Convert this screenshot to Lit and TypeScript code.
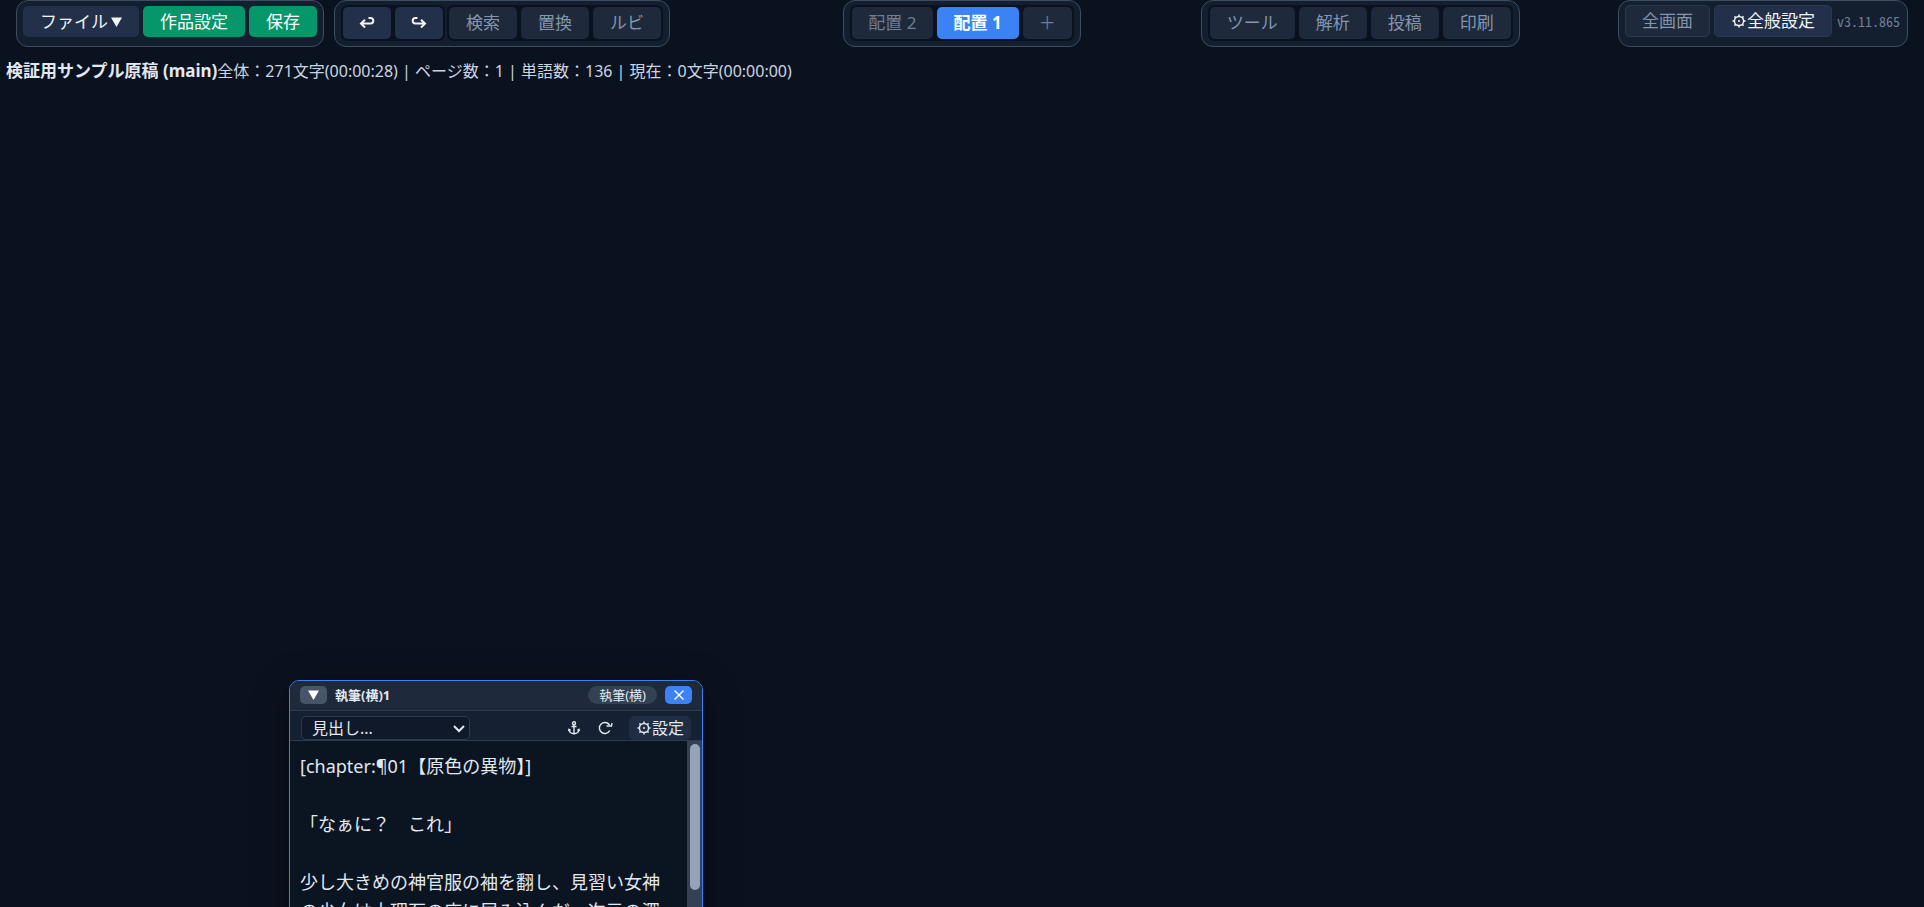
import { LitElement, html, css, svg } from "lit";
import { customElement, state } from "lit/decorators.js";

const stroke = (d: unknown, size = 16) => html`<svg class="ico" width=${size} height=${size} viewBox="0 0 16 16" aria-hidden="true">${d}</svg>`;

const undo = stroke(svg`<path d="M6 4.800 2 8.600l4 3.800M2.300 8.600H11.500a2.800 2.800 0 0 0 0-5.600H9.500"/>`);
const redo = stroke(svg`<path d="M10 4.800 14 8.600l-4 3.800M13.700 8.600H4.500a2.800 2.800 0 0 1 0-5.600H6.500"/>`);
const gear = html`<svg class="gear" width="16" height="14" viewBox="-1 0 16 14" aria-hidden="true">
  <circle cx="7" cy="7" r="4.600" /><circle class="dot" cx="7" cy="7" r="1" />
  <path d="M7 .5v2M7 11.500v2M.5 7h2M11.500 7h2M2.400 2.400l1.400 1.400M10.200 10.200l1.400 1.400M2.400 11.600l1.400-1.400M10.200 3.800l1.400-1.400" />
</svg>`;
const anchor = html`<svg class="thin" width="16" height="14" viewBox="-2 0 16 14" aria-hidden="true">
  <circle cx="6" cy="2.200" r="1.500" /><path d="M6 3.700v9M3.500 5.500h5M1 8.500c.3 2.700 2.300 4.200 5 4.200s4.700-1.500 5-4.200M.5 10 1 8.300l1.600 1M11.500 10 11 8.300l-1.600 1" />
</svg>`;
const reload = html`<svg class="thin" width="15" height="14" viewBox="0 0 15 14" aria-hidden="true">
  <path d="M11.800 9.500A5.500 5.500 0 1 1 11.500 4" /><path d="M8.500 5h5L14 2" />
</svg>`;
const cross = html`<svg class="thin" width="10" height="10" viewBox="0 0 10 10" aria-hidden="true"><path d="M.5.5l9 9M9.500.5l-9 9" /></svg>`;
const down = html`<svg class="tri" width="11" height="10" viewBox="0 0 11 10" aria-hidden="true"><path d="M0 .5h11L5.500 10z" /></svg>`;

@customElement("app-root")
export class AppRoot extends LitElement {
  @state() private layout = 1;

  static styles = css`
    :host {
      display: flex;
      flex-direction: column;
      position: relative;
      height: 100vh;
      overflow: hidden;
      background: #0b121f;
      color: #e2e8f0;
      font: 17px/24px "Noto Sans", "Noto Sans CJK JP", sans-serif;
    }
    * { box-sizing: border-box; }
    button, select, textarea { font: inherit; color: inherit; margin: 0; }
    button {
      display: inline-flex;
      align-items: center;
      justify-content: center;
      border: 0;
      padding: 0;
      white-space: nowrap;
    }
    svg { flex: none; fill: none; stroke: currentColor; }
    .ico { stroke-width: 2; }
    .gear { stroke-width: 1.5; }
    .gear .dot { fill: currentColor; stroke: none; }
    .thin { stroke-width: 1.4; }
    .tri { fill: currentColor; stroke: none; }
    .bar {
      display: grid;
      grid-template-columns: 1fr auto 1fr;
      padding: 0 16px;
    }
    .left { display: flex; gap: 10px; }
    .right { display: flex; justify-content: space-between; padding-left: 120px; }
    .group {
      display: flex;
      align-items: flex-start;
      height: 47px;
      border: 1px solid #3f4d62;
      border-radius: 12px;
      background: #131e2f;
      padding: 5px 6px 0;
      gap: 4px;
    }
    .tray {
      display: flex;
      gap: 4px;
      padding: 2px;
      margin-top: -1px;
      border-radius: 6px;
      background: #0b121f;
    }
    .group button {
      height: 31px;
      padding: 0 17px;
      border-radius: 5px;
      background: #1e293b;
      color: #8496ae;
    }
    .group .tray button { height: 32px; }
    .tray .solid { padding: 0 16px; }
    .group .solid { background: #22304a; color: #f1f5f9; }
    .group .green { background: #059669; color: #ffffff; }
    .group .active { background: #3b82f6; color: #ffffff; font-weight: 700; }
    .group .dim { padding: 0 16px; color: #6f7d91; }
    .group .edged { height: 32px; padding: 0 16px; border: 1px solid #2b3950; }
    .files .tri { margin-left: 3px; }
    .version { padding: 0 1px; font: 500 14px/32px "Noto Sans Mono CJK JP", monospace; color: #718096; }
    .edit { gap: 2px; }
    .end { padding-top: 4px; }
    .status { display: flex; padding: 12px 6px; color: #cbd5e1; }
    .status span { font-size: 16px; }
    .status strong { color: #e2e8f0; }
    .window {
      position: absolute;
      left: 289px;
      top: 680px;
      width: 414px;
      height: 420px;
      display: flex;
      flex-direction: column;
      border: 1px solid #3b82f6;
      border-radius: 10px;
      overflow: hidden;
      background: #0b1421;
      box-shadow: 0 8px 32px rgba(0, 0, 0, 0.5);
    }
    .title, .tools {
      display: flex;
      align-items: flex-start;
      height: 30px;
      padding: 5px 10px 0;
      background: #1e293b;
      border-bottom: 1px solid #2d3b50;
      flex: none;
    }
    .title { font-size: 13px; line-height: 18px; gap: 8px; }
    .title b { flex: 1; }
    .title button { width: 27px; height: 18px; border-radius: 5px; background: #475569; color: #ffffff; }
    .title .close { background: #3b82f6; }
    .pill { padding: 0 11px; border-radius: 9px; background: #334155; }
    .tools { background: #152033; padding: 5px 11px 0; }
    .pick { position: relative; display: flex; flex: none; width: 169px; margin-right: auto; }
    select {
      appearance: none;
      width: 100%;
      height: 24px;
      padding: 0 10px;
      font-size: 16px;
      line-height: 22px;
      border: 1px solid #2d3b50;
      border-radius: 5px;
      background: #0f192a;
    }
    .pick svg { position: absolute; right: 5px; top: 9px; stroke-width: 2; pointer-events: none; }
    .tools button { height: 24px; background: none; margin-left: 16px; }
    .tools .set { padding: 0 7px; border-radius: 5px; background: #202d43; font-size: 16px; }
    .body { display: flex; flex: 1; min-height: 0; }
    textarea {
      flex: 1;
      border: 0;
      resize: none;
      outline: 0;
      overflow: hidden;
      background: none;
      padding: 11px 10px;
      font-size: 18px;
      line-height: 29px;
    }
    .track { width: 15px; padding: 3px 2px; background: #334155; }
    .thumb { height: 146px; margin-left: 1px; width: 10px; border-radius: 5px; background: #94a3b8; }
  `;

  private text = "[chapter:¶01【原色の異物】]\n\n「なぁに？　これ」\n\n少し大きめの神官服の袖を翻し、見習い女神の少女は大理石の床に屈み込んだ。次元の深";

  private tab(n: number) {
    return html`<button class=${this.layout === n ? "active" : "dim"} @click=${() => (this.layout = n)}>配置 ${n}</button>`;
  }

  render() {
    return html`
      <header class="bar">
        <div class="left">
          <div class="group files">
            <button class="solid">ファイル${down}</button>
            <button class="green">作品設定</button>
            <button class="green">保存</button>
          </div>
          <div class="group edit">
            <div class="tray">
              <button class="solid" aria-label="元に戻す">${undo}</button>
              <button class="solid" aria-label="やり直す">${redo}</button>
            </div>
            <div class="tray">
              <button>検索</button><button>置換</button><button>ルビ</button>
            </div>
          </div>
        </div>
        <nav class="group"><div class="tray">${this.tab(2)}${this.tab(1)}<button class="dim">＋</button></div></nav>
        <div class="right">
          <div class="group"><div class="tray">
            <button>ツール</button><button>解析</button><button>投稿</button><button>印刷</button>
          </div></div>
          <div class="group end">
            <button class="edged">全画面</button>
            <button class="edged solid">${gear}全般設定</button>
            <span class="version">v3.11.865</span>
          </div>
        </div>
      </header>
      <div class="status"><strong>検証用サンプル原稿 (main)</strong><span>全体：271文字(00:00:28) | ページ数：1 | 単語数：136 | 現在：0文字(00:00:00)</span></div>
      <section class="window">
        <div class="title">
          <button aria-label="折りたたむ">${down}</button>
          <b>執筆(横)1</b>
          <span class="pill">執筆(横)</span>
          <button class="close" aria-label="閉じる">${cross}</button>
        </div>
        <div class="tools">
          <label class="pick">
            <select aria-label="見出し"><option>見出し...</option></select>
            <svg width="12" height="8" viewBox="0 0 12 8" aria-hidden="true"><path d="M1 1l5 5 5-5" /></svg>
          </label>
          <button aria-label="アンカー">${anchor}</button>
          <button aria-label="更新">${reload}</button>
          <button class="set">${gear}設定</button>
        </div>
        <div class="body">
          <textarea aria-label="本文" spellcheck="false" .value=${this.text}></textarea>
          <div class="track"><div class="thumb"></div></div>
        </div>
      </section>
    `;
  }
}
